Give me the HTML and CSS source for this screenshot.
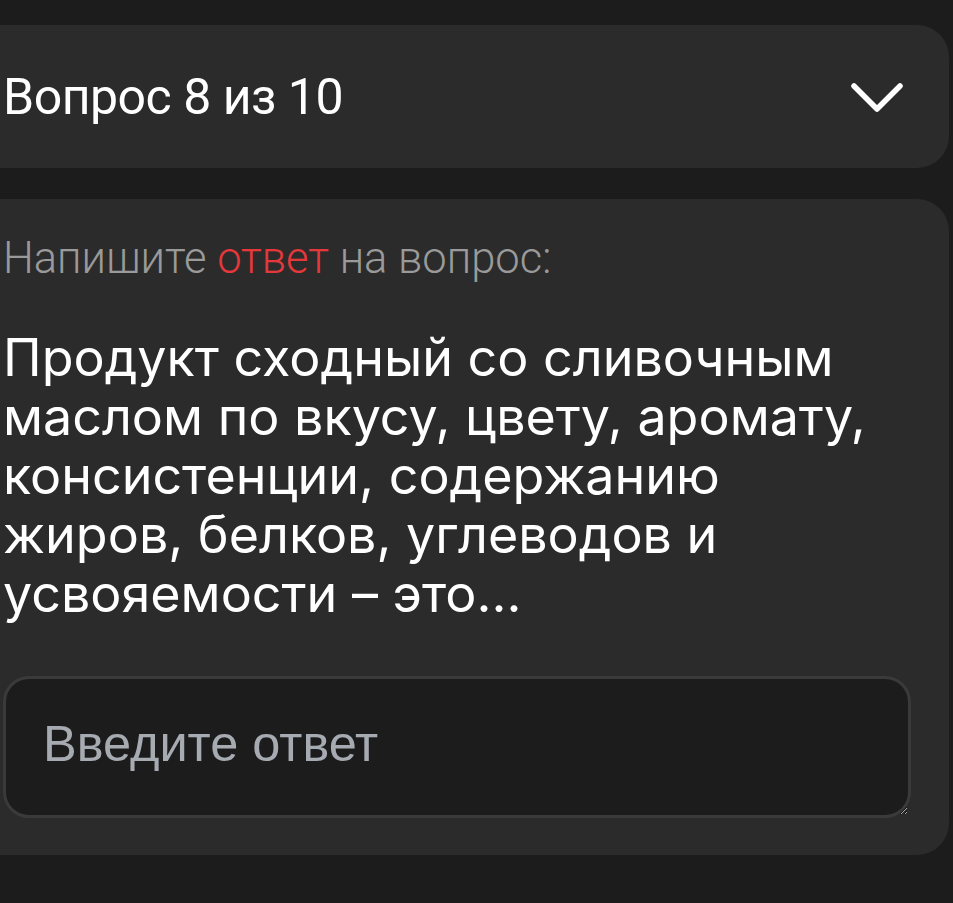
FILE: index.html
```html
<!DOCTYPE html>
<html lang="ru">
<head>
<meta charset="utf-8">
<link rel="stylesheet" href="styles.css">
</head>
<body>
<main class="page">
  <section class="card header-card">
    <h1 class="header-title">Вопрос 8 из 10</h1>
    <svg class="chevron" viewBox="0 0 56 34" width="56" height="34" aria-hidden="true">
      <path d="M5 5 L28 28 L51 5" fill="none" stroke="#fff" stroke-width="5.5" stroke-linecap="round" stroke-linejoin="round"/>
    </svg>
  </section>
  <section class="card question-card">
    <p class="hint">Напишите <span class="accent">ответ</span> на вопрос:</p>
    <p class="question">Продукт сходный со сливочным маслом по вкусу, цвету, аромату, консистенции, содержанию жиров, белков, углеводов и усвояемости – это...</p>
    <textarea class="answer" placeholder="Введите ответ"></textarea>
  </section>
</main>
</body>
</html>
```

FILE: styles.css
```css
html, body {
  margin: 0;
  padding: 0;
  background: #1c1c1c;
  height: 100%;
  overflow: hidden;
}
.page {
  display: flex;
  flex-direction: column;
  gap: 31px;
  padding-top: 25px;
  padding-right: 4px;
  font-family: "Inter", "Noto Sans", sans-serif;
  color: #fff;
}
.card {
  background: #2b2b2b;
  border-radius: 32px;
  margin-left: -40px;
  padding-left: 43px;
}
.header-card {
  height: 143px;
  box-sizing: border-box;
  display: flex;
  align-items: center;
  justify-content: space-between;
  padding-right: 44px;
}
.header-title {
  margin: 0;
  font-weight: 400;
  font-size: 50px;
  letter-spacing: -0.5px;
  font-family: "Roboto", "Inter", sans-serif;
}
.chevron {
  display: block;
  margin-top: 2px;
}
.question-card {
  height: 656px;
  box-sizing: border-box;
  padding-top: 34px;
  padding-right: 38px;
  display: flex;
  flex-direction: column;
}
.hint {
  margin: 0;
  font-size: 43.5px;
  line-height: 52px;
  font-weight: 300;
  color: #9a9a9a;
  font-family: "Roboto", "Inter", sans-serif;
}
.accent {
  color: #e5383b;
}
.question {
  margin: 43px 0 0;
  font-size: 52px;
  line-height: 59px;
  font-weight: 400;
  color: #fff;
}
.answer {
  margin-top: 53px;
  margin-left: 0;
  height: 142px;
  box-sizing: border-box;
  background: #1c1c1c;
  border: 3px solid #3a3a3a;
  border-radius: 26px;
  padding: 35px 37px;
  font-family: "Liberation Sans", Arial, sans-serif;
  font-size: 50.5px;
  color: #fff;
  outline: none;
  resize: both;
}
.answer::placeholder {
  color: #a6aab1;
}
```
